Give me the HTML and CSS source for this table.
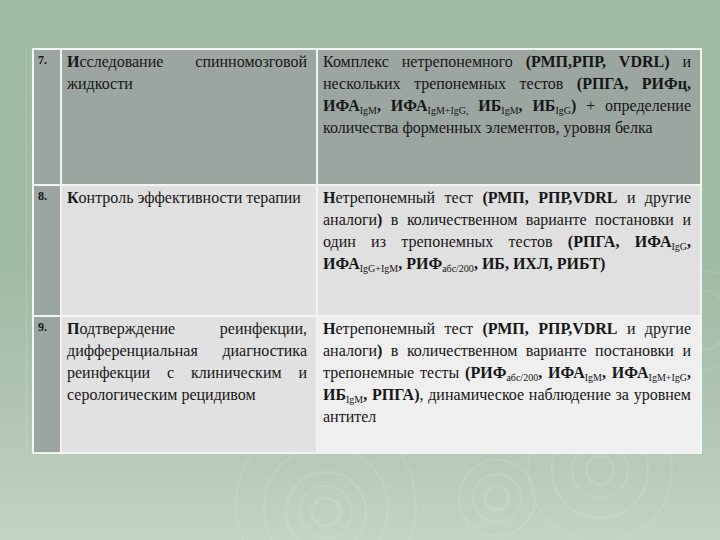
FILE: index.html
```html
<!DOCTYPE html>
<html>
<head>
<meta charset="utf-8">
<link rel="stylesheet" href="styles.css">
</head>
<body>
<div class="slide">
  <svg class="ripples" width="720" height="540" viewBox="0 0 720 540" aria-hidden="true">
    <g fill="none" stroke="#ffffff" stroke-opacity="0.11">
      <circle cx="326" cy="512" r="14" stroke-width="3"/>
      <circle cx="326" cy="512" r="26" stroke-width="2"/>
      <circle cx="326" cy="512" r="40" stroke-width="2"/>
      <circle cx="326" cy="508" r="62" stroke-width="2"/>
      <circle cx="326" cy="505" r="90" stroke-width="1.5"/>
      <circle cx="497" cy="498" r="12" stroke-width="3"/>
      <circle cx="497" cy="498" r="24" stroke-width="2"/>
      <circle cx="497" cy="498" r="38" stroke-width="2"/>
      <circle cx="600" cy="470" r="14" stroke-width="3"/>
      <circle cx="600" cy="470" r="28" stroke-width="2"/>
      <circle cx="600" cy="470" r="48" stroke-width="2"/>
      <circle cx="600" cy="470" r="72" stroke-width="1.5"/>
      <circle cx="700" cy="320" r="30" stroke-width="2"/>
      <circle cx="700" cy="320" r="50" stroke-width="1.5"/>
    </g>
  </svg>
  <div class="frame">
    <table class="grid">
      <colgroup>
        <col class="c-num">
        <col class="c-what">
        <col class="c-how">
      </colgroup>
      <tr class="row r1">
        <td class="num">7.</td>
        <td class="what">
          <span class="ln"><b>И</b>сследование спинномозговой</span>
          <span class="ln last">жидкости</span>
        </td>
        <td class="how">
          <span class="ln">Комплекс нетрепонемного <b>(РМП,РПР, VDRL)</b> и</span>
          <span class="ln">нескольких трепонемных тестов <b>(РПГА, РИФц,</b></span>
          <span class="ln"><b>ИФА<sub>IgM</sub>, ИФА<sub>IgM+IgG,</sub> ИБ<sub>IgM</sub>, ИБ<sub>IgG</sub>)</b> + определение</span>
          <span class="ln last">количества форменных элементов, уровня белка</span>
        </td>
      </tr>
      <tr class="row r2">
        <td class="num">8.</td>
        <td class="what">
          <span class="ln last"><b>К</b>онтроль эффективности терапии</span>
        </td>
        <td class="how">
          <span class="ln"><b>Н</b>етрепонемный тест <b>(РМП, РПР,VDRL</b> и другие</span>
          <span class="ln">аналоги<b>)</b> в количественном варианте постановки и</span>
          <span class="ln">один из трепонемных тестов <b>(РПГА, ИФА<sub>IgG</sub>,</b></span>
          <span class="ln last"><b>ИФА<sub>IgG+IgM</sub>, РИФ<sub>абс/200</sub>, ИБ, ИХЛ, РИБТ)</b></span>
        </td>
      </tr>
      <tr class="row r3">
        <td class="num">9.</td>
        <td class="what">
          <span class="ln"><b>П</b>одтверждение реинфекции,</span>
          <span class="ln">дифференциальная диагностика</span>
          <span class="ln">реинфекции с клиническим и</span>
          <span class="ln last">серологическим рецидивом</span>
        </td>
        <td class="how">
          <span class="ln"><b>Н</b>етрепонемный тест <b>(РМП, РПР,VDRL</b> и другие</span>
          <span class="ln">аналоги<b>)</b> в количественном варианте постановки и</span>
          <span class="ln">трепонемные тесты <b>(РИФ<sub>абс/200</sub>, ИФА<sub>IgM</sub>, ИФА<sub>IgM+IgG</sub>,</b></span>
          <span class="ln"><b>ИБ<sub>IgM</sub>, РПГА)</b>, динамическое наблюдение за уровнем</span>
          <span class="ln last">антител</span>
        </td>
      </tr>
    </table>
  </div>
</div>
</body>
</html>
```

FILE: styles.css
```css
html, body {
  margin: 0;
  padding: 0;
}

body {
  width: 720px;
  height: 540px;
  overflow: hidden;
  font-family: "Liberation Serif", serif;
}

.slide {
  position: relative;
  width: 720px;
  height: 540px;
  background: linear-gradient(180deg, #9fbaa3 0%, #a0bba4 50%, #b1c6b4 78%, #c3d3c6 100%);
  padding-top: 48px;
  box-sizing: border-box;
}

.ripples {
  position: absolute;
  left: 0;
  top: 0;
}

.frame {
  position: relative;
  margin-left: 26px;
  width: 675px;
  border-left: 1px solid rgba(255, 255, 255, 0.16);
  padding-left: 5px;
}

.grid {
  border-collapse: collapse;
  width: 670px;
  table-layout: fixed;
  border: 2px solid #f2f4f2;
  font-family: "Liberation Serif", serif;
}

.c-num { width: 28px; }
.c-what { width: 256px; }
.c-how { width: auto; }

.grid td {
  border: 2px solid #f2f4f2;
  vertical-align: top;
  color: #161616;
  font-size: 16px;
  line-height: 22px;
  letter-spacing: 0;
  padding: 1px 9px 0 5px;
}

.ln {
  display: block;
  white-space: nowrap;
  text-align: justify;
  text-align-last: justify;
}

.ln.last {
  text-align-last: left;
}

.grid td.num {
  background: #9aa59f;
  font-size: 12px;
  font-weight: bold;
  line-height: 14px;
  padding: 3px 0 0 4px;
}

.r1 { height: 136px; }
.r2 { height: 131px; }
.r3 { height: 137px; }

.r1 .what, .r1 .how { background: #9ba6a0; }
.r2 .what, .r2 .how { background: #e0e0e0; }
.r3 .what { background: #e1e1e1; }
.r3 .how { background: #efefef; }

.grid sub {
  font-size: 10px;
  font-weight: normal;
  line-height: 0;
  vertical-align: -3px;
}
```
